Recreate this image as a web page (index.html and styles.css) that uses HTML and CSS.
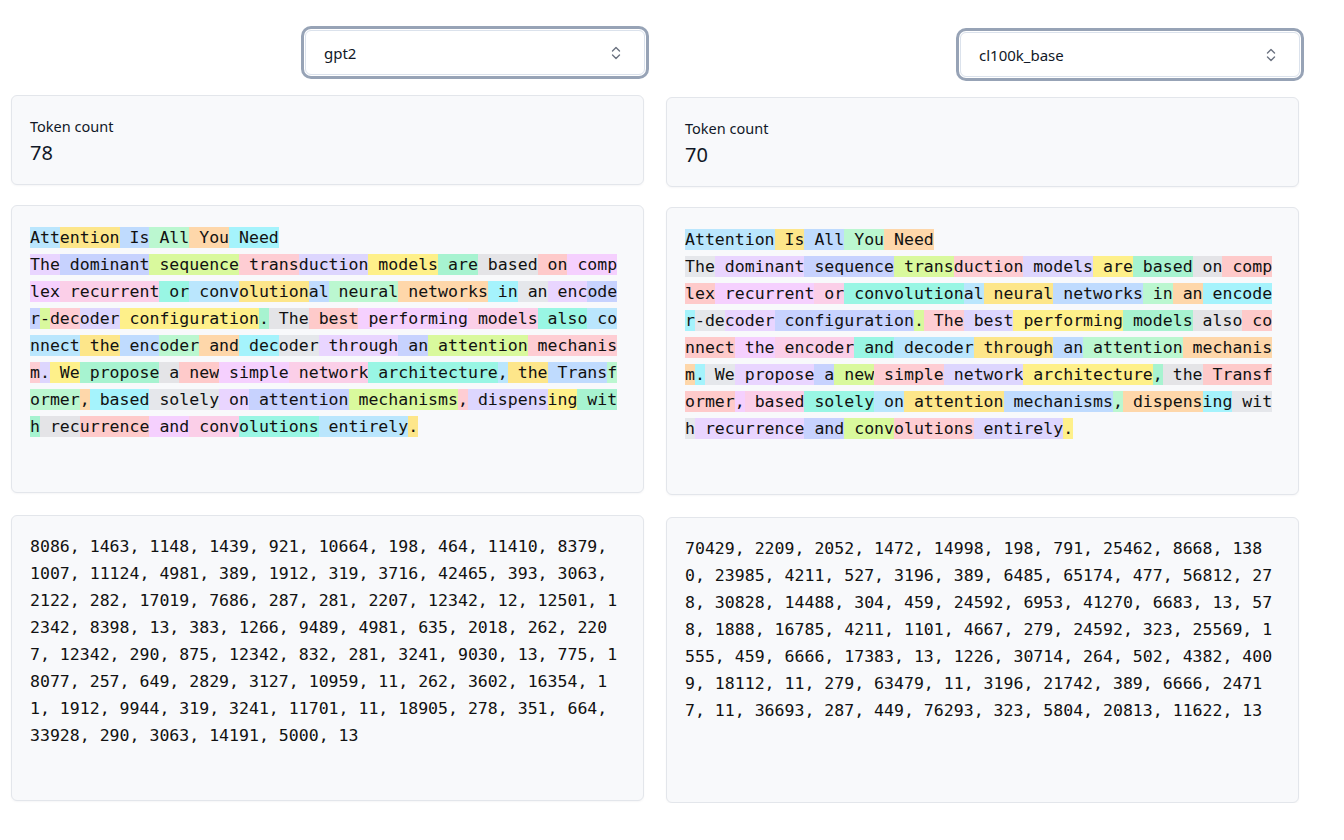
FILE: index.html
```html
<!DOCTYPE html>
<html lang="en">
<head>
<meta charset="utf-8">
<title>Tokenizer comparison</title>
<link rel="stylesheet" href="styles.css">
</head>
<body>
<div class="page">
  <section class="col">
    <div class="head">
      <div class="select">
        <span>gpt2</span>
        <svg class="chev" width="10" height="14" viewBox="0 0 10 14"><path d="M1.5 5L5 1.5L8.5 5M1.5 9L5 12.5L8.5 9" fill="none" stroke="#6b7280" stroke-width="1.4" stroke-linecap="round" stroke-linejoin="round"/></svg>
      </div>
    </div>
    <div class="card count">
      <div class="label">Token count</div>
      <div class="value">78</div>
    </div>
    <div class="card tokens"><span class="c0">Att</span><span class="c1">ention</span><span class="c2"> Is</span><span class="c3"> All</span><span class="c4"> You</span><span class="c5"> Need</span><span class="c6">
</span><span class="c7">The</span><span class="c8"> dominant</span><span class="c9"> sequence</span><span class="c10"> trans</span><span class="c11">duction</span><span class="c12"> models</span><span class="c13"> are</span><span class="c14"> based</span><span class="c15"> on</span><span class="c16"> complex</span><span class="c17"> recurrent</span><span class="c18"> or</span><span class="c0"> conv</span><span class="c1">olution</span><span class="c2">al</span><span class="c3"> neural</span><span class="c4"> networks</span><span class="c5"> in</span><span class="c6"> an</span><span class="c7"> enc</span><span class="c8">oder</span><span class="c9">-</span><span class="c10">dec</span><span class="c11">oder</span><span class="c12"> configuration</span><span class="c13">.</span><span class="c14"> The</span><span class="c15"> best</span><span class="c16"> performing</span><span class="c17"> models</span><span class="c18"> also</span><span class="c0"> connect</span><span class="c1"> the</span><span class="c2"> enc</span><span class="c3">oder</span><span class="c4"> and</span><span class="c5"> dec</span><span class="c6">oder</span><span class="c7"> through</span><span class="c8"> an</span><span class="c9"> attention</span><span class="c10"> mechanism</span><span class="c11">.</span><span class="c12"> We</span><span class="c13"> propose</span><span class="c14"> a</span><span class="c15"> new</span><span class="c16"> simple</span><span class="c17"> network</span><span class="c18"> architecture</span><span class="c0">,</span><span class="c1"> the</span><span class="c2"> Trans</span><span class="c3">former</span><span class="c4">,</span><span class="c5"> based</span><span class="c6"> solely</span><span class="c7"> on</span><span class="c8"> attention</span><span class="c9"> mechanisms</span><span class="c10">,</span><span class="c11"> dispens</span><span class="c12">ing</span><span class="c13"> with</span><span class="c14"> rec</span><span class="c15">urrence</span><span class="c16"> and</span><span class="c17"> conv</span><span class="c18">olutions</span><span class="c0"> entirely</span><span class="c1">.</span></div>
    <div class="card ids">8086, 1463, 1148, 1439, 921, 10664, 198, 464, 11410, 8379, 1007, 11124, 4981, 389, 1912, 319, 3716, 42465, 393, 3063, 2122, 282, 17019, 7686, 287, 281, 2207, 12342, 12, 12501, 12342, 8398, 13, 383, 1266, 9489, 4981, 635, 2018, 262, 2207, 12342, 290, 875, 12342, 832, 281, 3241, 9030, 13, 775, 18077, 257, 649, 2829, 3127, 10959, 11, 262, 3602, 16354, 11, 1912, 9944, 319, 3241, 11701, 11, 18905, 278, 351, 664, 33928, 290, 3063, 14191, 5000, 13</div>
  </section>
  <section class="col right">
    <div class="head">
      <div class="select">
        <span>cl100k_base</span>
        <svg class="chev" width="10" height="14" viewBox="0 0 10 14"><path d="M1.5 5L5 1.5L8.5 5M1.5 9L5 12.5L8.5 9" fill="none" stroke="#6b7280" stroke-width="1.4" stroke-linecap="round" stroke-linejoin="round"/></svg>
      </div>
    </div>
    <div class="card count">
      <div class="label">Token count</div>
      <div class="value">70</div>
    </div>
    <div class="card tokens"><span class="c0">Attention</span><span class="c1"> Is</span><span class="c2"> All</span><span class="c3"> You</span><span class="c4"> Need</span><span class="c5">
</span><span class="c6">The</span><span class="c7"> dominant</span><span class="c8"> sequence</span><span class="c9"> trans</span><span class="c10">duction</span><span class="c11"> models</span><span class="c12"> are</span><span class="c13"> based</span><span class="c14"> on</span><span class="c15"> complex</span><span class="c16"> recurrent</span><span class="c17"> or</span><span class="c18"> convolution</span><span class="c0">al</span><span class="c1"> neural</span><span class="c2"> networks</span><span class="c3"> in</span><span class="c4"> an</span><span class="c5"> encoder</span><span class="c6">-de</span><span class="c7">coder</span><span class="c8"> configuration</span><span class="c9">.</span><span class="c10"> The</span><span class="c11"> best</span><span class="c12"> performing</span><span class="c13"> models</span><span class="c14"> also</span><span class="c15"> connect</span><span class="c16"> the</span><span class="c17"> encoder</span><span class="c18"> and</span><span class="c0"> decoder</span><span class="c1"> through</span><span class="c2"> an</span><span class="c3"> attention</span><span class="c4"> mechanism</span><span class="c5">.</span><span class="c6"> We</span><span class="c7"> propose</span><span class="c8"> a</span><span class="c9"> new</span><span class="c10"> simple</span><span class="c11"> network</span><span class="c12"> architecture</span><span class="c13">,</span><span class="c14"> the</span><span class="c15"> Transformer</span><span class="c16">,</span><span class="c17"> based</span><span class="c18"> solely</span><span class="c0"> on</span><span class="c1"> attention</span><span class="c2"> mechanisms</span><span class="c3">,</span><span class="c4"> dispens</span><span class="c5">ing</span><span class="c6"> with</span><span class="c7"> recurrence</span><span class="c8"> and</span><span class="c9"> conv</span><span class="c10">olutions</span><span class="c11"> entirely</span><span class="c12">.</span></div>
    <div class="card ids">70429, 2209, 2052, 1472, 14998, 198, 791, 25462, 8668, 1380, 23985, 4211, 527, 3196, 389, 6485, 65174, 477, 56812, 278, 30828, 14488, 304, 459, 24592, 6953, 41270, 6683, 13, 578, 1888, 16785, 4211, 1101, 4667, 279, 24592, 323, 25569, 1555, 459, 6666, 17383, 13, 1226, 30714, 264, 502, 4382, 4009, 18112, 11, 279, 63479, 11, 3196, 21742, 389, 6666, 24717, 11, 36693, 287, 449, 76293, 323, 5804, 20813, 11622, 13</div>
  </section>
</div>
</body>
</html>
```

FILE: styles.css
```css
html, body {
  margin: 0;
  background: #ffffff;
}

body {
  font-family: "Noto Sans", "Open Sans", sans-serif;
  color: #111827;
}

.page {
  display: grid;
  grid-template-columns: 633px 633px;
  column-gap: 22px;
  padding-left: 11px;
}

.col {
  display: flex;
  flex-direction: column;
  gap: 20px;
  padding-top: 30px;
}

.col.right {
  padding-top: 32px;
}

.head {
  display: flex;
  justify-content: flex-end;
}

.select {
  width: 340px;
  height: 45px;
  box-sizing: border-box;
  margin-right: -1px;
  border: 1px solid #dbe2ec;
  border-radius: 6px;
  background: #ffffff;
  box-shadow: 0 0 0 1px #ffffff, 0 0 0 4px #97a3b6;
  display: flex;
  align-items: center;
  justify-content: space-between;
  padding: 0 23px 0 18px;
  font-size: 15px;
  color: #111827;
}

.chev {
  display: block;
}

.card {
  box-sizing: border-box;
  background: #f8f9fb;
  border: 1px solid #e3e6eb;
  border-radius: 6px;
  box-shadow: 0 1px 2px rgba(15, 23, 42, 0.04);
}

.count {
  height: 90px;
  padding: 20px 18px 18px;
}

.label {
  font-size: 14.5px;
  line-height: 20px;
}

.value {
  margin-top: 3px;
  font-size: 20px;
  line-height: 28px;
}

.tokens,
.ids {
  font-family: "DejaVu Sans Mono", "Liberation Mono", monospace;
  font-size: 16.55px;
  line-height: 27px;
  word-break: break-all;
  color: #111111;
}

.tokens {
  height: 288px;
  padding: 18px 18px 16px;
  white-space: pre-wrap;
}

.ids {
  height: 286px;
  margin-top: 2px;
  padding: 17px 18px;
}

.tokens span {
  padding: 1px 0;
}

.c0 { background: #bae6fd; }
.c1 { background: #fde68a; }
.c2 { background: #bfdbfe; }
.c3 { background: #bbf7d0; }
.c4 { background: #fed7aa; }
.c5 { background: #a5f3fc; }
.c6 { background: #e5e7eb; }
.c7 { background: #e9d5ff; }
.c8 { background: #c7d2fe; }
.c9 { background: #d9f99d; }
.c10 { background: #fecdd3; }
.c11 { background: #ddd6fe; }
.c12 { background: #fef08a; }
.c13 { background: #a7f3d0; }
.c14 { background: #e4e4e7; }
.c15 { background: #fecaca; }
.c16 { background: #f5d0fe; }
.c17 { background: #fbcfe8; }
.c18 { background: #99f6e4; }
```
